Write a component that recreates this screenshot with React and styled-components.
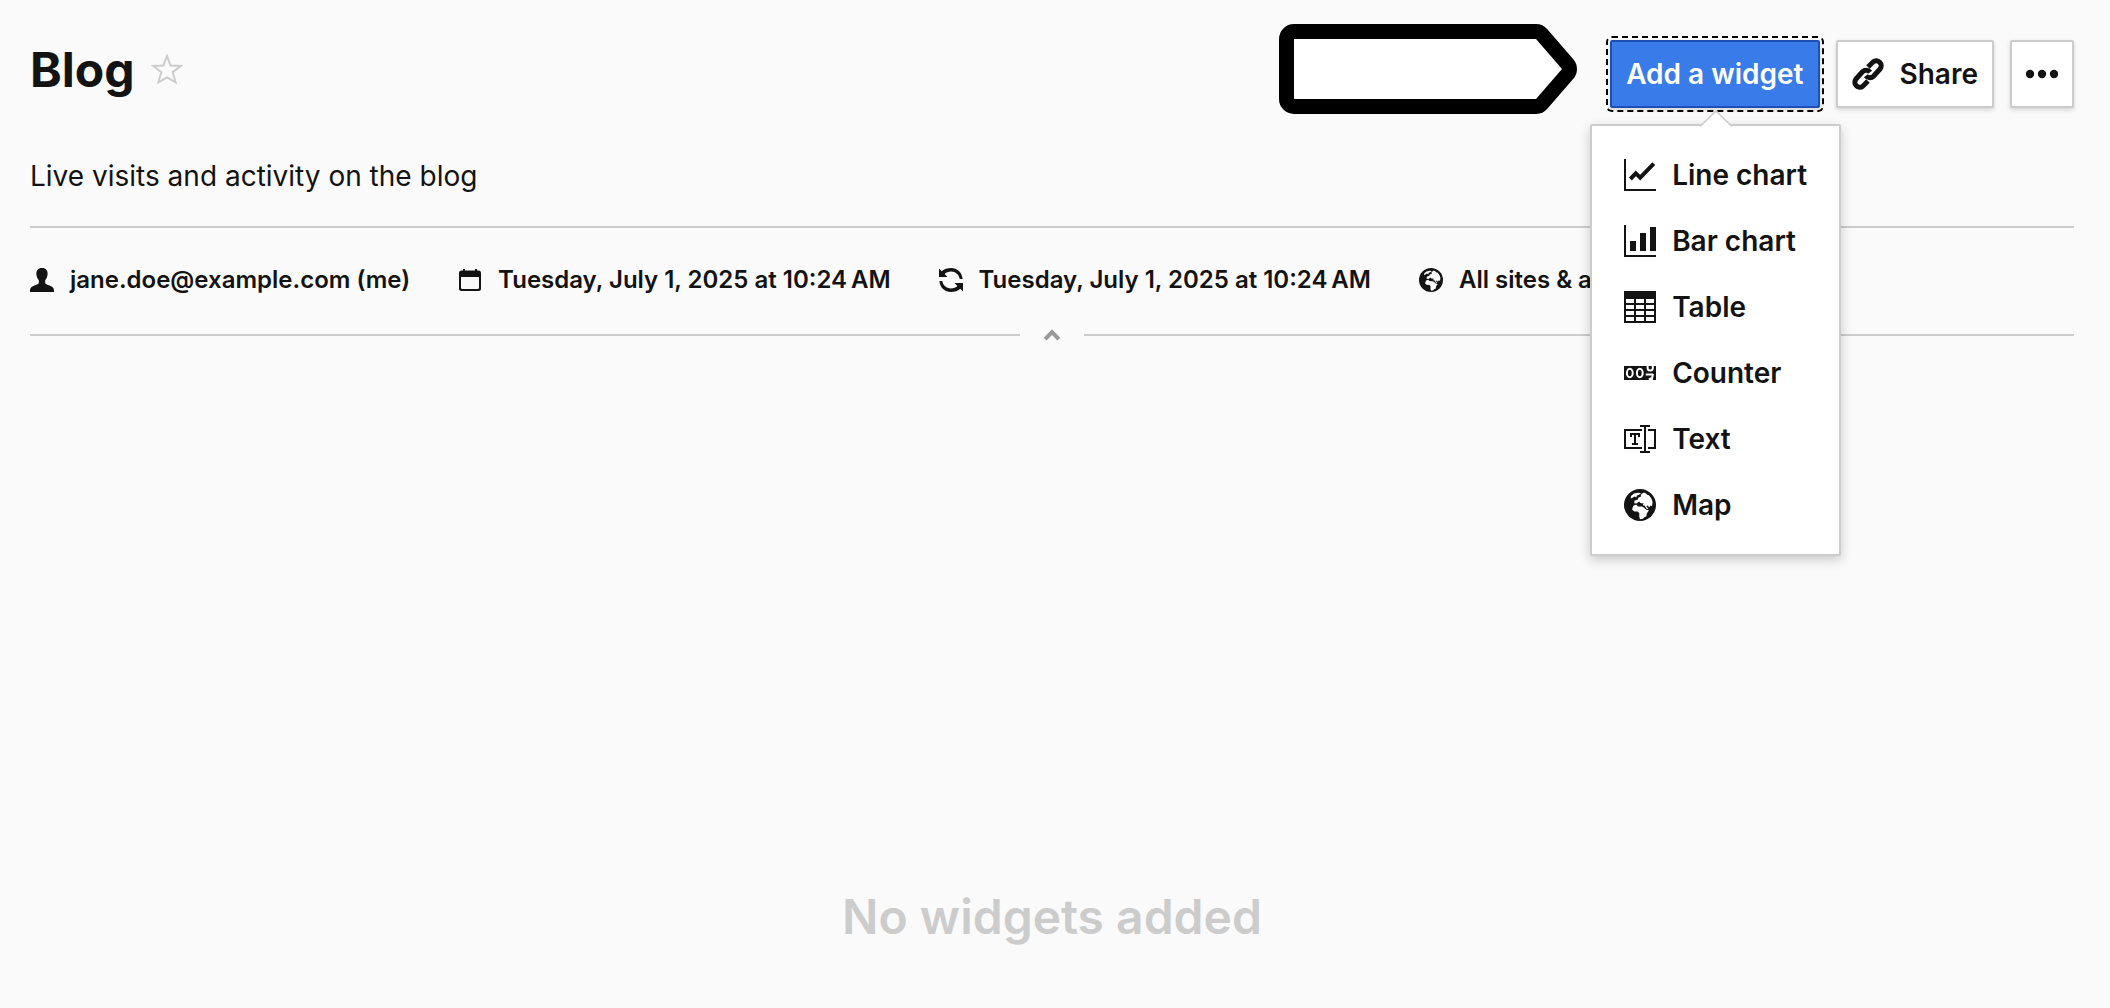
import React from "react";
import styled, { createGlobalStyle, css } from "styled-components";

const GlobalStyle = createGlobalStyle`
  *, *::before, *::after { box-sizing: border-box; }
  body {
    margin: 0;
    background: #fafafa;
    color: #131313;
    font-family: Inter, "Liberation Sans", sans-serif;
    font-size: 28px;
    line-height: 36px;
  }
`;

const Page = styled.main`
  padding: 24px 36px 0 30px;
`;

const Header = styled.header`
  display: flex;
  align-items: flex-start;
  justify-content: space-between;
  height: 116px;
`;

const TitleGroup = styled.div`
  display: flex;
  align-items: center;
  gap: 16px;
  padding-top: 16px;
`;

const Title = styled.h1`
  margin: 0;
  font-size: 48px;
  line-height: 60px;
  font-weight: 700;
`;

const IconButton = styled.button`
  display: flex;
  align-items: center;
  justify-content: center;
  padding: 0;
  border: 0;
  background: none;
  color: ${(p) => p.$color};
  cursor: pointer;
`;

const Actions = styled.div`
  display: flex;
  align-items: flex-start;
  gap: 31px;
`;

const Pointer = styled.svg`
  display: block;
  width: 300px;
  height: 90px;
`;

const Toolbar = styled.div`
  display: flex;
  gap: 16px;
  padding-top: 16px;
`;

const Button = styled.button`
  display: flex;
  align-items: center;
  gap: 16px;
  padding: 14px;
  border: 2px solid #cccccc;
  border-radius: 2px;
  background: #ffffff;
  color: #131313;
  box-shadow: 0 2px 4px rgba(0, 0, 0, 0.15);
  font: inherit;
  font-weight: 600;
  white-space: nowrap;
  cursor: pointer;
  ${(p) =>
    p.$primary &&
    css`
      border-color: #1f4fb5;
      background: #397be9;
      color: #ffffff;
      outline: 2px dashed #000000;
      outline-offset: 2px;
    `}
`;

const Dropdown = styled.div`
  position: relative;
`;

const Menu = styled.ul`
  position: absolute;
  z-index: 2;
  top: 84px;
  left: -20px;
  margin: 0;
  padding: 16px 0;
  list-style: none;
  border: 2px solid #cccccc;
  border-radius: 2px;
  background: #ffffff;
  box-shadow: 0 4px 12px rgba(0, 0, 0, 0.2);
`;

const MenuArrow = styled.svg`
  position: absolute;
  bottom: 100%;
  left: 50%;
  width: 34px;
  height: 18px;
  margin: 0 0 -2px -17px;
`;

const MenuItem = styled.button`
  display: flex;
  align-items: center;
  gap: 16px;
  width: 100%;
  height: 66px;
  padding: 0 32px;
  border: 0;
  background: none;
  color: inherit;
  font: inherit;
  font-weight: 600;
  white-space: nowrap;
  cursor: pointer;
`;

const Description = styled.p`
  margin: 0;
  padding: 16px 0 30px;
  line-height: 40px;
  border-bottom: 2px solid #cccccc;
`;

const MetaList = styled.ul`
  display: flex;
  gap: 48px;
  margin: 0;
  padding: 34px 0 26px;
  list-style: none;
`;

const MetaItem = styled.li`
  display: flex;
  align-items: center;
  gap: 16px;
  font-size: 24px;
  line-height: 35px;
  font-weight: 600;
  white-space: nowrap;
`;

const Divider = styled.div`
  display: flex;
  align-items: center;
  height: 24px;
  &::before,
  &::after {
    content: "";
    flex: 1;
    height: 2px;
    background: #cccccc;
  }
`;

const Toggle = styled(IconButton)`
  width: 64px;
  height: 24px;
`;

const EmptyState = styled.p`
  margin: 0;
  padding: 540px 0 0;
  color: #cccccc;
  font-size: 48px;
  line-height: 60px;
  font-weight: 600;
  text-align: center;
`;

const Glyph = styled.svg`
  display: block;
  flex: none;
  width: ${(p) => p.$size}px;
  height: ${(p) => p.$size}px;
`;

const Icon = ({ size = 32, box = size, children }) => (
  <Glyph $size={size} viewBox={`0 0 ${box} ${box}`} fill="currentColor" aria-hidden="true">
    {children}
  </Glyph>
);

const StarIcon = () => (
  <Icon size={32}>
    <path
      d="M16 2 19.600 11.500 29.600 12 21.700 18.200 24.600 28.300 16 23.300 7.400 28.300 10.300 18.200 2.400 12 12.400 11.500Z"
      fill="none"
      stroke="currentColor"
      strokeWidth="2"
    />
  </Icon>
);

const LinkIcon = () => (
  <Icon>
    <g fill="none" stroke="currentColor" strokeWidth="5">
      <path d="M16 9 21.200 3.800a5 5 0 0 1 7 7L21.500 18.200a5 5 0 0 1-7.600-.4" />
      <path d="M16 23 10.800 28.200a5 5 0 0 1-7-7L10.500 13.800a5 5 0 0 1 7.600.4" />
    </g>
  </Icon>
);

const LineChartIcon = () => (
  <Icon>
    <path d="M0 0h2v30h30v2H0z" />
    <path d="M6.4 20 11.8 14.4 16.2 18.6 29.8 4.6" fill="none" stroke="currentColor" strokeWidth="4" />
  </Icon>
);

const BarChartIcon = () => (
  <Icon>
    <path d="M0 0h2v30h30v2H0zM6 16h6v10H6zM16 8h6v18h-6zM26 2h6v24h-6z" />
  </Icon>
);

const TableIcon = () => (
  <Icon>
    <path
      fillRule="evenodd"
      d="M0 0h32v32H0zM2 8v4h8V8zM12 8v4h8V8zM22 8v4h8V8zM2 14v4h8v-4zM12 14v4h8v-4zM22 14v4h8v-4zM2 20v4h8v-4zM12 20v4h8v-4zM22 20v4h8v-4zM2 26v4h8v-4zM12 26v4h8v-4zM22 26v4h8v-4z"
    />
  </Icon>
);

const CounterIcon = () => (
  <Icon>
    <path d="M0 9h32v14H0z" />
    <g fill="none" stroke="#ffffff" strokeWidth="2">
      <ellipse cx="5.8" cy="16" rx="2.9" ry="4.2" />
      <ellipse cx="15.8" cy="16" rx="2.9" ry="4.2" />
      <path d="M23.6 9v2a2.6 2.6 0 0 0 5.2 0V9M21.8 17.6h7.2M28.9 17c0 2-1 3-1 6M25 22.6l2-1.6" />
    </g>
  </Icon>
);

const TextIcon = () => (
  <Icon>
    <path d="M0 6h18v2H2v16h16v2H0zM24 6h8v20h-8v-2h6V8h-6zM16 2h10v2h-4v24h4v2H16v-2h4V4h-4z" />
    <path d="M6 10h10v4h-2v-2h-2v8h2v2H8v-2h2v-8H8v2H6z" />
  </Icon>
);

const GlobeIcon = ({ size = 32, land = "#ffffff" }) => (
  <Icon size={size} box={32}>
    <circle cx="16" cy="16" r="16" />
    <g fill={land}>
      <path d="M7 7 10 4.6 14 3.8 17.2 4.2 15 5.8 13 6.4 12.4 8.2 10.4 7.4 8.6 8.8 6.8 9.6z" />
      <path d="M10.2 14.2 10.6 11.4 13.6 10.8 14.4 8.8 17 7.6 16.8 5.4 19.8 3.4 22 4.6 23.6 6 25 6.2 27.4 9.6 28.6 13 28 17.2 26.4 16.4 25.2 18.4 23.8 16.6 22.4 17.2 24.4 20 22.8 20 20.6 16.4 18.6 16.2 19.8 14.4 16.4 14 15.2 12.6 12.6 14.6z" />
      <path d="M9.4 16.8 12.2 15.6 14 17.4 17.6 17.6 19.8 18.4 22.2 20.8 25 21.2 22.8 24.4 22.4 27.2 20.4 28.2 18.8 29.8 16 30.2 15.2 27.6 15.4 24.6 13.8 22.4 10.4 22.6 8 20.4z" />
    </g>
  </Icon>
);

const UserIcon = () => (
  <Icon size={24}>
    <path d="M12 0c4 0 5.900 2.600 5.600 6.200-.2 2.600-1.200 4.600-2.400 6V15c0 2 8.800 2.400 8.800 7.200V24H0v-1.800C0 17.400 8.800 17 8.800 15v-2.800c-1.200-1.400-2.200-3.400-2.400-6C6.100 2.600 8 0 12 0z" />
  </Icon>
);

const CalendarIcon = () => (
  <Icon size={24}>
    <path
      fillRule="evenodd"
      d="M3.500 2.500H5V1h2v1.500h10V1h2v1.500h1.500A2.500 2.500 0 0 1 23 5v15.500a2.500 2.500 0 0 1-2.500 2.500h-17A2.500 2.500 0 0 1 1 20.500V5a2.500 2.500 0 0 1 2.500-2.500zM3 9v10.500a1.500 1.500 0 0 0 1.500 1.500h15a1.500 1.500 0 0 0 1.500-1.500V9z"
    />
  </Icon>
);

const RefreshIcon = () => (
  <Icon size={24}>
    <path d="M0 .5 2.700 3.200C5.200 1 8.400 0 12 0c6 0 11.200 4.400 11.600 11h-2.800C20 6.800 16.600 3.600 12 3.600c-2.600 0-5 1-6.400 2.400L8.500 9H0z" />
    <path d="M24 23.500 21.300 20.800C18.800 23 15.600 24 12 24 6 24 .8 19.600.4 13h2.800c.8 4.200 4.200 7.400 8.800 7.400 2.600 0 5-1 6.400-2.400L15.500 15H24z" />
  </Icon>
);

const ChevronUpIcon = () => (
  <Icon size={24}>
    <path d="M5.200 16.200 12 9.200 18.800 16.200" fill="none" stroke="currentColor" strokeWidth="4" />
  </Icon>
);

const DotsIcon = () => (
  <Icon>
    <circle cx="4" cy="16" r="4.200" />
    <circle cx="16" cy="16" r="4.200" />
    <circle cx="28" cy="16" r="4.200" />
  </Icon>
);

const widgetTypes = [
  { label: "Line chart", icon: <LineChartIcon /> },
  { label: "Bar chart", icon: <BarChartIcon /> },
  { label: "Table", icon: <TableIcon /> },
  { label: "Counter", icon: <CounterIcon /> },
  { label: "Text", icon: <TextIcon /> },
  { label: "Map", icon: <GlobeIcon /> },
];

const metadata = [
  { label: "jane.doe@example.com (me)", icon: <UserIcon /> },
  { label: "Tuesday, July 1, 2025 at 10:24\u202fAM", icon: <CalendarIcon /> },
  { label: "Tuesday, July 1, 2025 at 10:24\u202fAM", icon: <RefreshIcon /> },
  { label: "All sites & apps", icon: <GlobeIcon size={24} land="#fafafa" /> },
];

export default function App() {
  return (
    <>
      <GlobalStyle />
      <Page>
        <Header>
          <TitleGroup>
            <Title>Blog</Title>
            <IconButton type="button" $color="#cccccc" aria-label="Add to favorites">
              <StarIcon />
            </IconButton>
          </TitleGroup>
          <Actions>
            <Pointer viewBox="0 0 300 90" aria-hidden="true">
              <path
                d="M15 15H257L283 45 257 75H15Z"
                stroke="#000000"
                strokeWidth="30"
                strokeLinejoin="round"
              />
              <path d="M15 15H257L283 45 257 75H15Z" fill="#ffffff" />
            </Pointer>
            <Toolbar>
              <Dropdown>
                <Button type="button" $primary aria-haspopup="menu" aria-expanded="true">
                  Add a widget
                </Button>
                <Menu>
                  <MenuArrow viewBox="0 0 34 18" aria-hidden="true">
                    <path d="M1 18V16.500L17 1 33 16.500V18z" fill="#ffffff" />
                    <path d="M1 16.500 17 1 33 16.500" fill="none" stroke="#cccccc" strokeWidth="1.500" />
                  </MenuArrow>
                  {widgetTypes.map((type) => (
                    <li key={type.label}>
                      <MenuItem type="button">
                        {type.icon}
                        {type.label}
                      </MenuItem>
                    </li>
                  ))}
                </Menu>
              </Dropdown>
              <Button type="button">
                <LinkIcon />
                Share
              </Button>
              <Button type="button" aria-label="More actions">
                <DotsIcon />
              </Button>
            </Toolbar>
          </Actions>
        </Header>
        <Description>Live visits and activity on the blog</Description>
        <MetaList>
          {metadata.map((item, index) => (
            <MetaItem key={index}>
              {item.icon}
              {item.label}
            </MetaItem>
          ))}
        </MetaList>
        <Divider>
          <Toggle type="button" $color="#999999" aria-label="Collapse details">
            <ChevronUpIcon />
          </Toggle>
        </Divider>
        <EmptyState>No widgets added</EmptyState>
      </Page>
    </>
  );
}
